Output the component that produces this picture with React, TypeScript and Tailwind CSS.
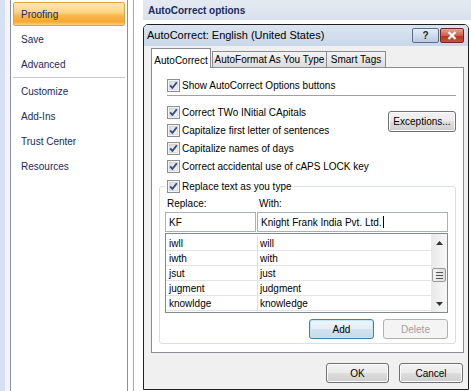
import React from "react";

function Check() {
  return (
    <svg width="13" height="13" viewBox="0 0 13 13" className="shrink-0">
      <defs>
        <linearGradient id="cbg" x1="0" y1="0" x2="1" y2="1">
          <stop offset="0" stopColor="#d8d8d8" />
          <stop offset="1" stopColor="#fafafa" />
        </linearGradient>
      </defs>
      <rect x="0.5" y="0.5" width="12" height="12" fill="#f4f4f4" stroke="#8e8f8f" />
      <rect x="2.5" y="2.5" width="8" height="8" fill="url(#cbg)" stroke="#c9c9c9" strokeWidth="0.6" />
      <path d="M3.2 6.4 L5.4 9 L9.8 3.2" fill="none" stroke="#304b8c" strokeWidth="1.9" strokeLinejoin="round" />
    </svg>
  );
}

function CheckRow({ label }: { label: string }) {
  return (
    <div className="flex h-[18px] items-center gap-[2px]">
      <Check />
      <span className="whitespace-nowrap">{label}</span>
    </div>
  );
}

const btn =
  "flex h-[20px] items-center justify-center rounded-[3px] border border-[#707070] bg-[linear-gradient(#f2f2f2_0%,#ebebeb_48%,#dddddd_52%,#cfcfcf_100%)] shadow-[inset_0_0_0_1px_#fbfbfb] text-black";

const rows: [string, string][] = [
  ["iwll", "will"],
  ["iwth", "with"],
  ["jsut", "just"],
  ["jugment", "judgment"],
  ["knowldge", "knowledge"],
];

const nav = ["Save", "Advanced"];
const nav2 = ["Customize", "Add-Ins", "Trust Center", "Resources"];

export default function App() {
  return (
    <div className="flex h-[391px] w-[471px] overflow-hidden bg-white font-['Liberation_Sans',Arial,sans-serif] text-[10px] text-black">
      <div className="h-full w-[5px] shrink-0 bg-[#d6e2f3]" />
      <div className="h-full w-[5px] shrink-0 bg-[#f3f4f6]" />
      <div className="flex h-full w-[118px] shrink-0 flex-col gap-px border-x border-[#8f8f9c] bg-white px-[2px] pt-[2px] text-[#1c2a5e]">
        <div className="flex h-[24px] items-center rounded-[2px] border border-[#dca544] bg-[linear-gradient(#fee8b4_0%,#fcd582_42%,#f9b64c_58%,#f8a734_85%,#fcd17c_100%)] pl-[7px]">
          Proofing
        </div>
        {nav.map((n) => (
          <div key={n} className="flex h-[24px] items-center pl-[8px]">
            {n}
          </div>
        ))}
        <div className="h-px bg-[#c8c8c8]" />
        {nav2.map((n) => (
          <div key={n} className="flex h-[24px] items-center pl-[8px]">
            {n}
          </div>
        ))}
      </div>
      <div className="h-full w-[5px] shrink-0 bg-white" />
      <div className="h-full w-px shrink-0 bg-[#a9a9b3]" />
      <div className="h-full w-[9px] shrink-0 bg-white" />
      <div className="flex w-[328px] shrink-0 flex-col">
        <div className="flex h-[20px] items-center bg-[linear-gradient(#e4eaf2,#d9e1ec)] pl-[5px] text-[10px] font-bold text-[#1b2a5c]">
          AutoCorrect options
        </div>
        <div className="mt-[4px] flex h-[366px] w-[326px] flex-col rounded-t-[5px] border border-[#202020] bg-[#f0f0f0]">
          <div className="flex h-[21px] items-center justify-between rounded-t-[4px] bg-[linear-gradient(#dbe5f1,#c9d7e8)] pl-[3px] pr-[4px]">
            <span className="text-[11px] text-black">AutoCorrect: English (United States)</span>
            <div className="flex items-center gap-px">
              <div className="flex h-[15px] w-[27px] items-center justify-center rounded-[2px] border border-[#5b6f8c] bg-[linear-gradient(#e6eef7,#b9cbe0)] text-[10px] font-bold leading-none text-[#1f1f1f]">
                ?
              </div>
              <div className="flex h-[15px] w-[24px] items-center justify-center rounded-[2px] border border-[#6e2a22] bg-[linear-gradient(#e4a493_0%,#d0604c_50%,#b8321e_52%,#c9523d_100%)]">
                <svg width="10" height="9" viewBox="0 0 10 9">
                  <path d="M1.5 1 L8.5 8 M8.5 1 L1.5 8" stroke="#ffffff" strokeWidth="2.2" />
                </svg>
              </div>
            </div>
          </div>
          <div className="flex flex-1 flex-col pl-[7px] pr-[4px] pt-[2px]">
            <div className="relative z-10 flex h-[19px] items-end">
              <div className="-mb-px flex h-[20px] w-[60px] items-start justify-center border-x border-t border-[#898c95] bg-white pt-[4px]">
                AutoCorrect
              </div>
              <div className="ml-[1px] flex h-[16px] w-[115px] items-center justify-center border-x border-t border-[#898c95] bg-[linear-gradient(#f3f3f3,#dcdcdc)]">
                AutoFormat As You Type
              </div>
              <div className="flex h-[16px] w-[59px] items-center justify-center border-r border-t border-[#898c95] bg-[linear-gradient(#f3f3f3,#dcdcdc)]">
                Smart Tags
              </div>
            </div>
            <div className="flex h-[286px] w-[313px] flex-col border border-[#898c95] bg-white pt-[8px]">
              <div className="pl-[15px]">
                <CheckRow label="Show AutoCorrect Options buttons" />
              </div>
              <div className="ml-[15px] mr-[7px] mt-px h-px bg-[#a0a0a0]" />
              <div className="mt-[7px] flex justify-between pl-[15px] pr-[7px]">
                <div className="flex flex-col">
                  <CheckRow label="Correct TWo INitial CApitals" />
                  <CheckRow label="Capitalize first letter of sentences" />
                  <CheckRow label="Capitalize names of days" />
                  <CheckRow label="Correct accidental use of cAPS LOCK key" />
                </div>
                <div className={btn + " mt-[8px] h-[21px] w-[68px]"}>Exceptions...</div>
              </div>
              <div className="mx-[7px] mt-[11px] flex flex-col rounded-[3px] border border-[#d5dfe5] pb-[4px] pl-[5px] pr-[7px]">
                <div className="-mt-[10px] w-fit bg-white pl-[2px] pr-[2px]">
                  <CheckRow label="Replace text as you type" />
                </div>
                <div className="mt-px flex h-[15px] items-center">
                  <span className="w-[92px] pl-[2px]">Replace:</span>
                  <span className="pl-[2px]">With:</span>
                </div>
                <div className="mt-px flex h-[20px]">
                  <div className="flex w-[91px] items-center border border-[#a9afb8] bg-white pl-[3px]">KF</div>
                  <div className="ml-px flex flex-1 items-center border border-[#a9afb8] bg-white pl-[3px]">
                    Knight Frank India Pvt. Ltd.
                    <span className="ml-px inline-block h-[12px] w-px bg-black" />
                  </div>
                </div>
                <div className="mt-px flex h-[80px] border border-[#828790] bg-white">
                  <div className="flex flex-1 flex-col pt-[2px]">
                    {rows.map(([a, b]) => (
                      <div key={a} className="flex h-[15px] border-b border-[#e4e4e4]">
                        <div className="flex w-[92px] items-center border-r border-[#e0e0e0] pl-[3px]">{a}</div>
                        <div className="flex items-center pl-[2px]">{b}</div>
                      </div>
                    ))}
                  </div>
                  <div className="flex w-[16px] flex-col bg-[linear-gradient(90deg,#e9e9e9,#f6f6f6)]">
                    <div className="flex h-[17px] items-center justify-center">
                      <svg width="7" height="4" viewBox="0 0 7 4">
                        <path d="M0 4 L3.5 0 L7 4 Z" fill="#333" />
                      </svg>
                    </div>
                    <div className="h-[17px]" />
                    <div className="mx-px flex h-[14px] flex-col items-center justify-center gap-[2px] rounded-[2px] border border-[#9a9a9a] bg-[linear-gradient(90deg,#f4f4f4,#dcdcdc)]">
                      <div className="h-px w-[7px] bg-[#555]" />
                      <div className="h-px w-[7px] bg-[#555]" />
                      <div className="h-px w-[7px] bg-[#555]" />
                    </div>
                    <div className="flex-1" />
                    <div className="flex h-[17px] items-center justify-center">
                      <svg width="7" height="4" viewBox="0 0 7 4">
                        <path d="M0 0 L3.5 4 L7 0 Z" fill="#333" />
                      </svg>
                    </div>
                  </div>
                </div>
                <div className="mt-[6px] flex justify-end gap-[9px]">
                  <div className="flex h-[20px] w-[65px] items-center justify-center rounded-[3px] border border-[#3c7fb1] bg-[linear-gradient(#f0f6fb_0%,#e3edf5_48%,#d3e2ee_52%,#c6d9e8_100%)] shadow-[inset_0_0_0_1px_#bfe6fb]">
                    Add
                  </div>
                  <div className="flex h-[20px] w-[65px] items-center justify-center rounded-[3px] border border-[#adb2b5] bg-[#f4f4f4] text-[#a0a0a0]">
                    Delete
                  </div>
                </div>
              </div>
            </div>
            <div className="flex justify-end gap-[10px] pr-px pt-[10px]">
              <div className={btn + " w-[63px]"}>OK</div>
              <div className={btn + " w-[64px]"}>Cancel</div>
            </div>
          </div>
        </div>
      </div>
    </div>
  );
}
